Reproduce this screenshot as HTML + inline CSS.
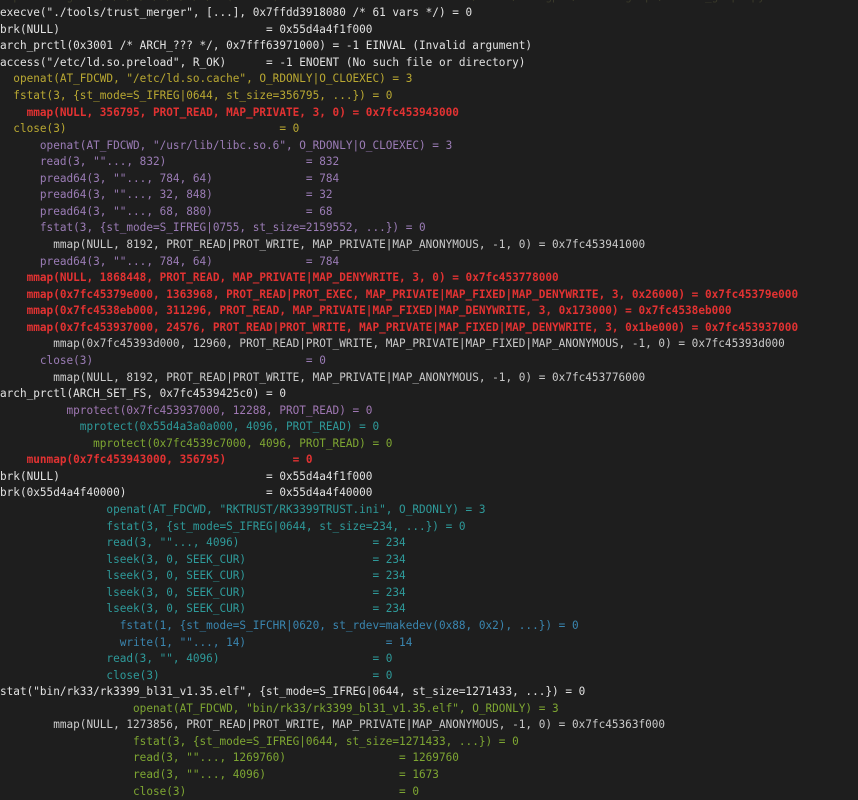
<!DOCTYPE html>
<html><head><meta charset="utf-8"><style>
html,body{margin:0;padding:0;background:#1e1e1e;width:858px;height:800px;overflow:hidden}
pre{position:absolute;left:0;top:-11.4px;margin:0;font-family:"DejaVu Sans Mono","Liberation Mono",monospace;font-size:11.05px;line-height:16.57px;color:#dcdcdc;white-space:pre}
.w{color:#e2e2e2}.y{color:#b9a832}.r{color:#e23232;font-weight:bold}.p{color:#9b7cb6}.g{color:#cacaca}
.m{color:#a078b4}.t{color:#2e9a9a}.n{color:#7ea632}.b{color:#3a86b0}.f{color:#3a3a2a}
</style></head><body>
<pre><span class="f">lupdate.log  -l/1/2/3/4/5/6/7/8/9 (master)  cd  .....................  /Users/chengpeo/strace-graph/strace_graph.py</span>
<span class="w">execve("./tools/trust_merger", [...], 0x7ffdd3918080 /* 61 vars */) = 0</span>
<span class="w">brk(NULL)                               = 0x55d4a4f1f000</span>
<span class="w">arch_prctl(0x3001 /* ARCH_??? */, 0x7fff63971000) = -1 EINVAL (Invalid argument)</span>
<span class="w">access("/etc/ld.so.preload", R_OK)      = -1 ENOENT (No such file or directory)</span>
<span class="y">  openat(AT_FDCWD, "/etc/ld.so.cache", O_RDONLY|O_CLOEXEC) = 3</span>
<span class="y">  fstat(3, {st_mode=S_IFREG|0644, st_size=356795, ...}) = 0</span>
<span class="r">    mmap(NULL, 356795, PROT_READ, MAP_PRIVATE, 3, 0) = 0x7fc453943000</span>
<span class="y">  close(3)                                = 0</span>
<span class="p">      openat(AT_FDCWD, "/usr/lib/libc.so.6", O_RDONLY|O_CLOEXEC) = 3</span>
<span class="p">      read(3, ""..., 832)                     = 832</span>
<span class="p">      pread64(3, ""..., 784, 64)              = 784</span>
<span class="p">      pread64(3, ""..., 32, 848)              = 32</span>
<span class="p">      pread64(3, ""..., 68, 880)              = 68</span>
<span class="p">      fstat(3, {st_mode=S_IFREG|0755, st_size=2159552, ...}) = 0</span>
<span class="g">        mmap(NULL, 8192, PROT_READ|PROT_WRITE, MAP_PRIVATE|MAP_ANONYMOUS, -1, 0) = 0x7fc453941000</span>
<span class="p">      pread64(3, ""..., 784, 64)              = 784</span>
<span class="r">    mmap(NULL, 1868448, PROT_READ, MAP_PRIVATE|MAP_DENYWRITE, 3, 0) = 0x7fc453778000</span>
<span class="r">    mmap(0x7fc45379e000, 1363968, PROT_READ|PROT_EXEC, MAP_PRIVATE|MAP_FIXED|MAP_DENYWRITE, 3, 0x26000) = 0x7fc45379e000</span>
<span class="r">    mmap(0x7fc4538eb000, 311296, PROT_READ, MAP_PRIVATE|MAP_FIXED|MAP_DENYWRITE, 3, 0x173000) = 0x7fc4538eb000</span>
<span class="r">    mmap(0x7fc453937000, 24576, PROT_READ|PROT_WRITE, MAP_PRIVATE|MAP_FIXED|MAP_DENYWRITE, 3, 0x1be000) = 0x7fc453937000</span>
<span class="g">        mmap(0x7fc45393d000, 12960, PROT_READ|PROT_WRITE, MAP_PRIVATE|MAP_FIXED|MAP_ANONYMOUS, -1, 0) = 0x7fc45393d000</span>
<span class="p">      close(3)                                = 0</span>
<span class="g">        mmap(NULL, 8192, PROT_READ|PROT_WRITE, MAP_PRIVATE|MAP_ANONYMOUS, -1, 0) = 0x7fc453776000</span>
<span class="w">arch_prctl(ARCH_SET_FS, 0x7fc4539425c0) = 0</span>
<span class="m">          mprotect(0x7fc453937000, 12288, PROT_READ) = 0</span>
<span class="t">            mprotect(0x55d4a3a0a000, 4096, PROT_READ) = 0</span>
<span class="n">              mprotect(0x7fc4539c7000, 4096, PROT_READ) = 0</span>
<span class="r">    munmap(0x7fc453943000, 356795)          = 0</span>
<span class="w">brk(NULL)                               = 0x55d4a4f1f000</span>
<span class="w">brk(0x55d4a4f40000)                     = 0x55d4a4f40000</span>
<span class="t">                openat(AT_FDCWD, "RKTRUST/RK3399TRUST.ini", O_RDONLY) = 3</span>
<span class="t">                fstat(3, {st_mode=S_IFREG|0644, st_size=234, ...}) = 0</span>
<span class="t">                read(3, ""..., 4096)                    = 234</span>
<span class="t">                lseek(3, 0, SEEK_CUR)                   = 234</span>
<span class="t">                lseek(3, 0, SEEK_CUR)                   = 234</span>
<span class="t">                lseek(3, 0, SEEK_CUR)                   = 234</span>
<span class="t">                lseek(3, 0, SEEK_CUR)                   = 234</span>
<span class="b">                  fstat(1, {st_mode=S_IFCHR|0620, st_rdev=makedev(0x88, 0x2), ...}) = 0</span>
<span class="b">                  write(1, ""..., 14)                     = 14</span>
<span class="t">                read(3, "", 4096)                       = 0</span>
<span class="t">                close(3)                                = 0</span>
<span class="w">stat("bin/rk33/rk3399_bl31_v1.35.elf", {st_mode=S_IFREG|0644, st_size=1271433, ...}) = 0</span>
<span class="n">                    openat(AT_FDCWD, "bin/rk33/rk3399_bl31_v1.35.elf", O_RDONLY) = 3</span>
<span class="g">        mmap(NULL, 1273856, PROT_READ|PROT_WRITE, MAP_PRIVATE|MAP_ANONYMOUS, -1, 0) = 0x7fc45363f000</span>
<span class="n">                    fstat(3, {st_mode=S_IFREG|0644, st_size=1271433, ...}) = 0</span>
<span class="n">                    read(3, ""..., 1269760)                 = 1269760</span>
<span class="n">                    read(3, ""..., 4096)                    = 1673</span>
<span class="n">                    close(3)                                = 0</span>
</pre>
</body></html>
